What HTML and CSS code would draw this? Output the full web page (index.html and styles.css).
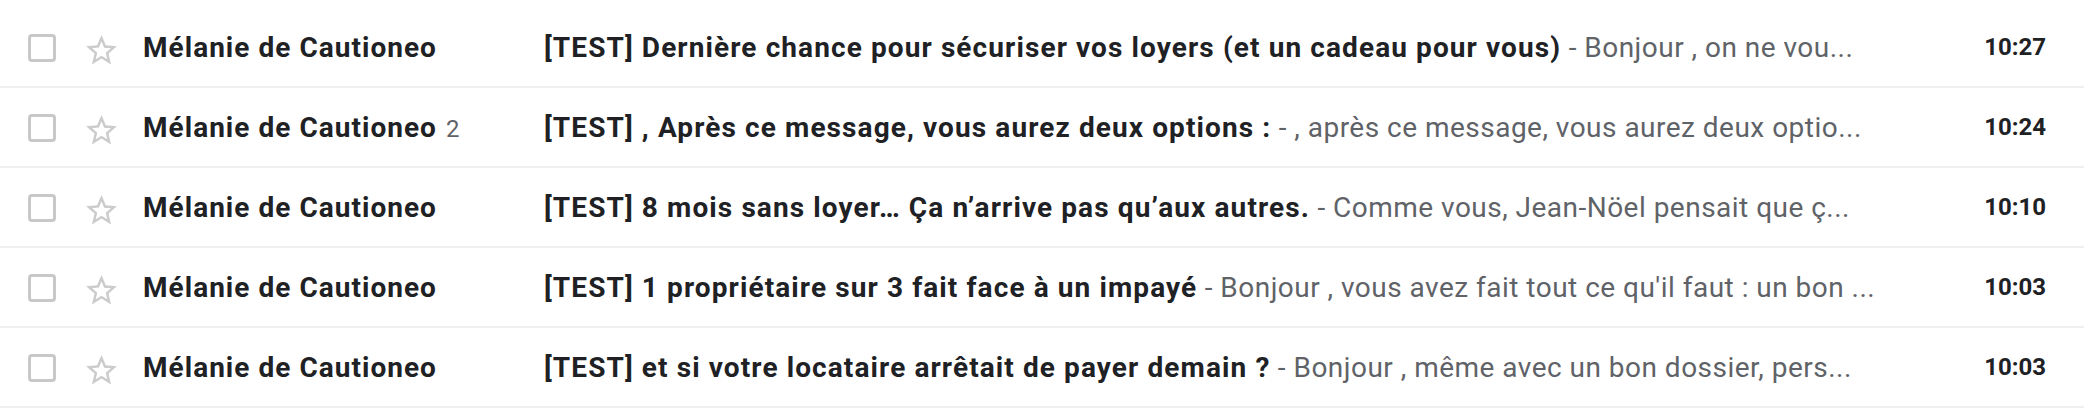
FILE: index.html
```html
<!DOCTYPE html>
<html lang="fr">
<head>
<meta charset="utf-8">
<title>Boîte de réception</title>
<link rel="stylesheet" href="styles.css">
</head>
<body>
<div class="list">
  <div class="row">
    <span class="check"></span>
    <svg class="star" viewBox="0 0 24 24"><path d="M22 9.24l-7.19-.62L12 2 9.19 8.63 2 9.24l5.46 4.73L5.82 21 12 17.27 18.18 21l-1.63-7.03L22 9.24zM12 15.4l-3.76 2.27 1-4.28-3.32-2.88 4.38-.38L12 6.1l1.71 4.04 4.38.38-3.32 2.88 1 4.28L12 15.4z"/></svg>
    <div class="sender"><span class="name">Mélanie de Cautioneo</span></div>
    <div class="main"><span class="subject">[TEST] Dernière chance pour sécuriser vos loyers (et un cadeau pour vous)</span><span class="snippet"> - Bonjour , on ne vou...</span></div>
    <div class="time">10:27</div>
  </div>
  <div class="row">
    <span class="check"></span>
    <svg class="star" viewBox="0 0 24 24"><path d="M22 9.24l-7.19-.62L12 2 9.19 8.63 2 9.24l5.46 4.73L5.82 21 12 17.27 18.18 21l-1.63-7.03L22 9.24zM12 15.4l-3.76 2.27 1-4.28-3.32-2.88 4.38-.38L12 6.1l1.71 4.04 4.38.38-3.32 2.88 1 4.28L12 15.4z"/></svg>
    <div class="sender"><span class="name">Mélanie de Cautioneo</span><span class="count">2</span></div>
    <div class="main"><span class="subject">[TEST] , Après ce message, vous aurez deux options :</span><span class="snippet"> - , après ce message, vous aurez deux optio...</span></div>
    <div class="time">10:24</div>
  </div>
  <div class="row">
    <span class="check"></span>
    <svg class="star" viewBox="0 0 24 24"><path d="M22 9.24l-7.19-.62L12 2 9.19 8.63 2 9.24l5.46 4.73L5.82 21 12 17.27 18.18 21l-1.63-7.03L22 9.24zM12 15.4l-3.76 2.27 1-4.28-3.32-2.88 4.38-.38L12 6.1l1.71 4.04 4.38.38-3.32 2.88 1 4.28L12 15.4z"/></svg>
    <div class="sender"><span class="name">Mélanie de Cautioneo</span></div>
    <div class="main"><span class="subject">[TEST] 8 mois sans loyer… Ça n’arrive pas qu’aux autres.</span><span class="snippet"> - Comme vous, Jean-Nöel pensait que ç...</span></div>
    <div class="time">10:10</div>
  </div>
  <div class="row">
    <span class="check"></span>
    <svg class="star" viewBox="0 0 24 24"><path d="M22 9.24l-7.19-.62L12 2 9.19 8.63 2 9.24l5.46 4.73L5.82 21 12 17.27 18.18 21l-1.63-7.03L22 9.24zM12 15.4l-3.76 2.27 1-4.28-3.32-2.88 4.38-.38L12 6.1l1.71 4.04 4.38.38-3.32 2.88 1 4.28L12 15.4z"/></svg>
    <div class="sender"><span class="name">Mélanie de Cautioneo</span></div>
    <div class="main"><span class="subject">[TEST] 1 propriétaire sur 3 fait face à un impayé</span><span class="snippet"> - Bonjour , vous avez fait tout ce qu'il faut : un bon ...</span></div>
    <div class="time">10:03</div>
  </div>
  <div class="row">
    <span class="check"></span>
    <svg class="star" viewBox="0 0 24 24"><path d="M22 9.24l-7.19-.62L12 2 9.19 8.63 2 9.24l5.46 4.73L5.82 21 12 17.27 18.18 21l-1.63-7.03L22 9.24zM12 15.4l-3.76 2.27 1-4.28-3.32-2.88 4.38-.38L12 6.1l1.71 4.04 4.38.38-3.32 2.88 1 4.28L12 15.4z"/></svg>
    <div class="sender"><span class="name">Mélanie de Cautioneo</span></div>
    <div class="main"><span class="subject">[TEST] et si votre locataire arrêtait de payer demain ?</span><span class="snippet"> - Bonjour , même avec un bon dossier, pers...</span></div>
    <div class="time">10:03</div>
  </div>
</div>
</body>
</html>
```
FILE: styles.css
```css
html, body {
  margin: 0;
  background: #ffffff;
}
body {
  font-family: Roboto, "Liberation Sans", Arial, sans-serif;
  color: #202124;
}
.list {
  padding-top: 8px;
}
.row {
  display: flex;
  align-items: center;
  height: 78px;
  border-bottom: 2px solid #efeff0;
  padding-left: 28px;
  padding-right: 38px;
  white-space: nowrap;
}
.check {
  flex: none;
  width: 22px;
  height: 22px;
  border: 3px solid #c8c8c8;
  border-radius: 4px;
  margin-top: 2px;
}
.star {
  flex: none;
  width: 37px;
  height: 37px;
  fill: #cccccc;
  margin-left: 27px;
  margin-top: 6px;
}
.sender {
  flex: none;
  width: 424px;
  box-sizing: border-box;
  padding-left: 23px;
  font-size: 28px;
  font-weight: 700;
  letter-spacing: 1.03px;
}
.count {
  font-size: 24px;
  font-weight: 400;
  color: #5f6368;
  margin-left: 9px;
  letter-spacing: 0;
}
.main {
  flex: 1;
  min-width: 0;
  overflow: hidden;
  text-overflow: ellipsis;
}
.subject {
  font-size: 28px;
  font-weight: 700;
  letter-spacing: 1.1px;
}
.snippet {
  font-size: 28px;
  font-weight: 400;
  color: #5f6368;
  letter-spacing: 0.48px;
}
.time {
  flex: none;
  width: 120px;
  text-align: right;
  font-size: 24px;
  font-weight: 700;
}
```
